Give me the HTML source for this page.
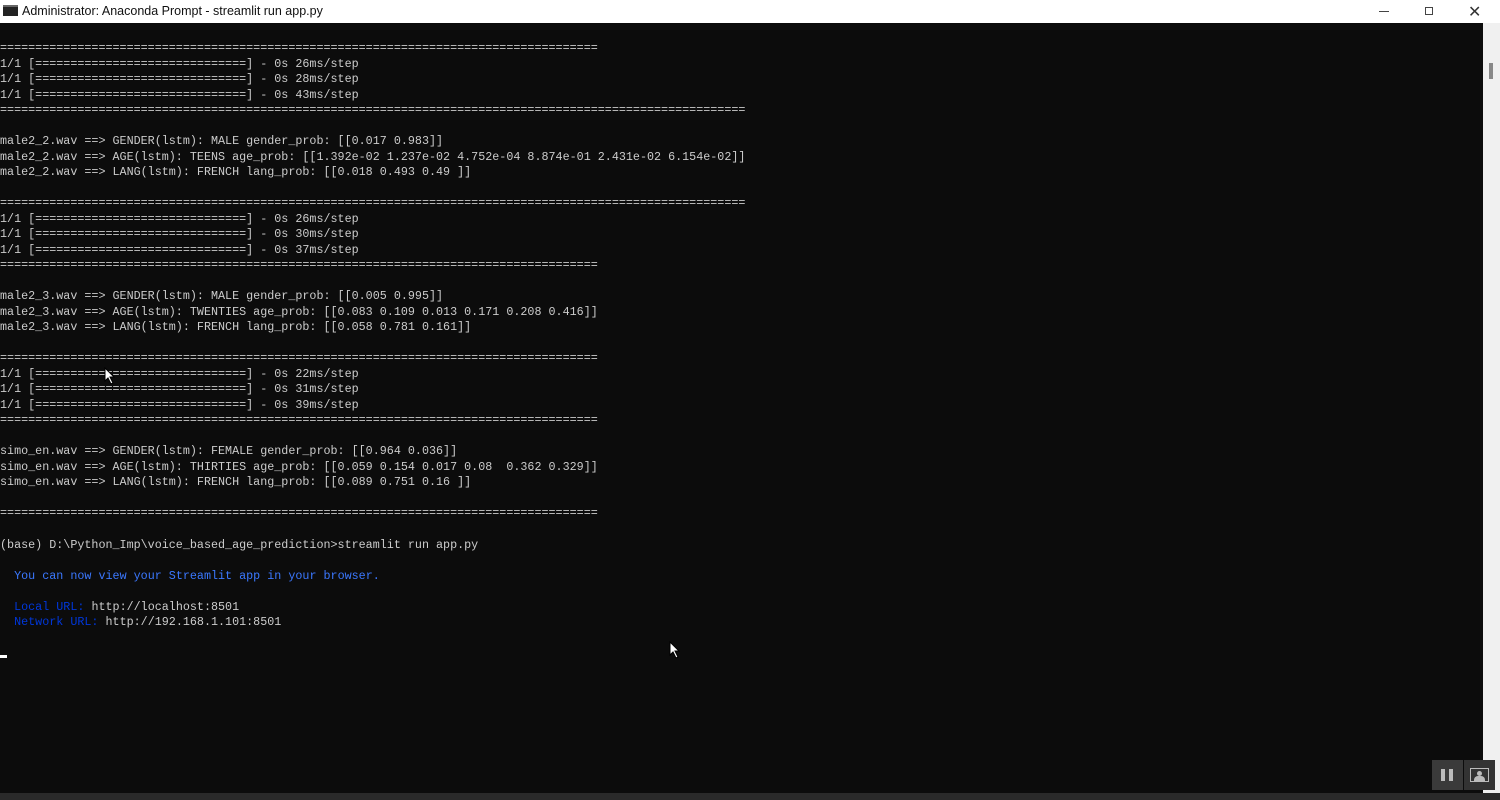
<!DOCTYPE html>
<html><head><meta charset="utf-8"><style>
*{margin:0;padding:0;box-sizing:border-box}
body{width:1500px;height:800px;overflow:hidden;background:#0c0c0c;position:relative;font-family:"Liberation Sans",sans-serif}
#title{position:absolute;left:0;top:0;width:1500px;height:23px;background:#fff;font-size:12.5px;color:#111}
#title .t{position:absolute;left:22px;top:4px}
#title .ic{position:absolute;left:3px;top:5px;width:15px;height:11px;background:#222;border-top:2px solid #666}
#term{position:absolute;left:0;top:23px;width:1483px;height:770px;background:#0c0c0c}
pre{position:absolute;left:0;top:18px;font-family:"Liberation Mono",monospace;font-size:11.72px;line-height:15.51px;color:#cccccc;white-space:pre}
.b{color:#3b78ff}.d{color:#0037da}
#sb{position:absolute;left:1483px;top:23px;width:17px;height:770px;background:#f0f0f0}
#sb i{position:absolute;left:6px;top:40px;width:4px;height:16px;background:#888}
#bot{position:absolute;left:0;top:793px;width:1500px;height:7px;background:#2a2a2a}
.btn{position:absolute;top:760px;width:31px;height:30px;background:#3a3a3a}
</style></head><body>
<div id="title"><div class="ic"></div><div class="t">Administrator: Anaconda Prompt - streamlit  run app.py</div>
<div style="position:absolute;left:1379px;top:11px;width:10px;height:1px;background:#444"></div>
<div style="position:absolute;left:1425px;top:7px;width:8px;height:8px;border:1px solid #444"></div>
<div style="position:absolute;left:1468px;top:2px;font-size:16px;color:#333">✕</div>
</div>
<div id="term"><pre>=====================================================================================
1/1 [==============================] - 0s 26ms/step
1/1 [==============================] - 0s 28ms/step
1/1 [==============================] - 0s 43ms/step
==========================================================================================================

male2_2.wav ==> GENDER(lstm): MALE gender_prob: [[0.017 0.983]]
male2_2.wav ==> AGE(lstm): TEENS age_prob: [[1.392e-02 1.237e-02 4.752e-04 8.874e-01 2.431e-02 6.154e-02]]
male2_2.wav ==> LANG(lstm): FRENCH lang_prob: [[0.018 0.493 0.49 ]]

==========================================================================================================
1/1 [==============================] - 0s 26ms/step
1/1 [==============================] - 0s 30ms/step
1/1 [==============================] - 0s 37ms/step
=====================================================================================

male2_3.wav ==> GENDER(lstm): MALE gender_prob: [[0.005 0.995]]
male2_3.wav ==> AGE(lstm): TWENTIES age_prob: [[0.083 0.109 0.013 0.171 0.208 0.416]]
male2_3.wav ==> LANG(lstm): FRENCH lang_prob: [[0.058 0.781 0.161]]

=====================================================================================
1/1 [==============================] - 0s 22ms/step
1/1 [==============================] - 0s 31ms/step
1/1 [==============================] - 0s 39ms/step
=====================================================================================

simo_en.wav ==> GENDER(lstm): FEMALE gender_prob: [[0.964 0.036]]
simo_en.wav ==> AGE(lstm): THIRTIES age_prob: [[0.059 0.154 0.017 0.08  0.362 0.329]]
simo_en.wav ==> LANG(lstm): FRENCH lang_prob: [[0.089 0.751 0.16 ]]

=====================================================================================

(base) D:\Python_Imp\voice_based_age_prediction>streamlit run app.py

  <span class="b">You can now view your Streamlit app in your browser.</span>

  <span class="d">Local URL:</span> http://localhost:8501
  <span class="d">Network URL:</span> http://192.168.1.101:8501
</pre>
<div style="position:absolute;left:0;top:632px;width:7px;height:3px;background:#fff"></div>
<svg style="position:absolute;left:104px;top:344px" width="12" height="18" viewBox="0 0 12 18"><path d="M1 1 L1 14 L4 11 L7 17 L9 16 L6 10 L10 10 Z" fill="#fff" stroke="#000" stroke-width="1"/></svg>
<svg style="position:absolute;left:669px;top:618px" width="12" height="18" viewBox="0 0 12 18"><path d="M1 1 L1 14 L4 11 L7 17 L9 16 L6 10 L10 10 Z" fill="#fff" stroke="#000" stroke-width="1"/></svg>
</div>
<div id="sb"><i></i></div>
<div id="bot"></div>
<div class="btn" style="left:1432px"><div style="position:absolute;left:9px;top:9px;width:4px;height:12px;background:#bbb"></div><div style="position:absolute;left:17px;top:9px;width:4px;height:12px;background:#bbb"></div></div>
<div class="btn" style="left:1464px;background:#333"><div style="position:absolute;left:6px;top:8px;width:19px;height:14px;border:1px solid #bbb"></div><div style="position:absolute;left:13px;top:11px;width:5px;height:5px;border-radius:50%;background:#bbb"></div><div style="position:absolute;left:10px;top:16px;width:11px;height:5px;background:#bbb;border-radius:4px 4px 0 0"></div></div>
</body></html>
